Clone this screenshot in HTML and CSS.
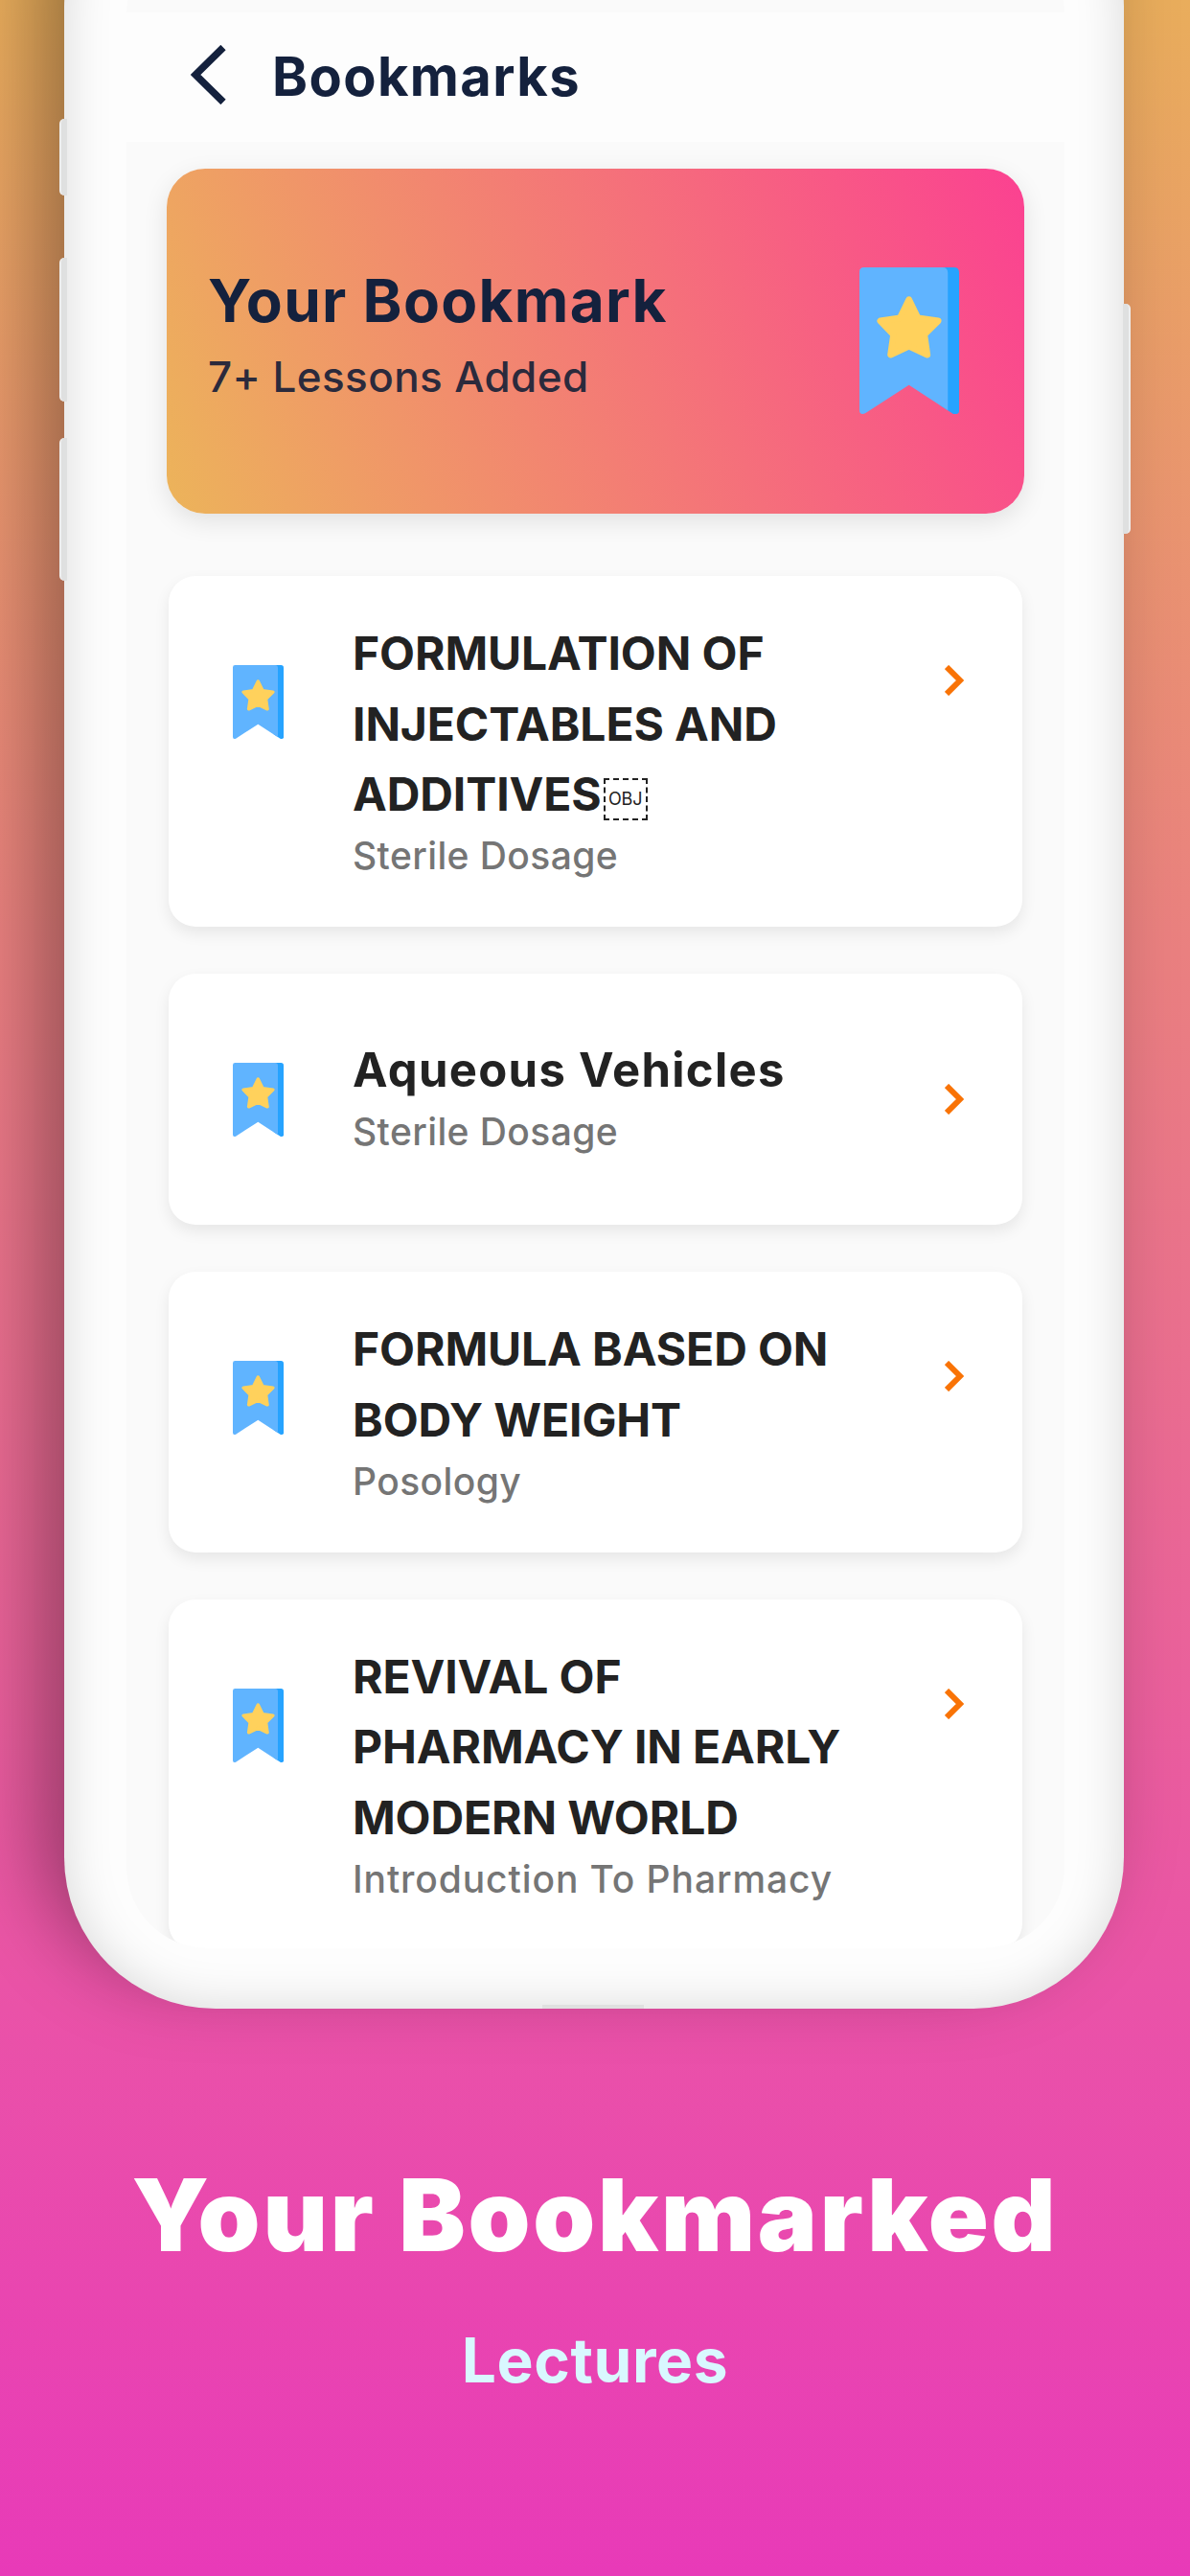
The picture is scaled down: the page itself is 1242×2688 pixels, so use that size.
FILE: index.html
```
<!DOCTYPE html>
<html lang="en">
<head>
  <meta charset="UTF-8">
  <meta name="viewport" content="width=device-width, initial-scale=1.0">
  <title>Bookmarks</title>
  <link rel="stylesheet" href="styles.css">
</head>
<body>
  <!-- Shared icons -->
  <svg class="sprite" width="0" height="0">
    <symbol id="bookmark" viewBox="0 0 310 460" preserveAspectRatio="none">
      <path fill="#26a3ff" d="M250 0H294Q310 0 310 16V450Q310 460 300 460H292L250 432Z"/>
      <path fill="#60b4ff" d="M14 0H258Q275 0 275 18V449L154 369L18 458Q0 464 0 448V14Q0 0 14 0Z"/>
      <path fill="#ffd15c" stroke="#ffd15c" stroke-width="20" stroke-linejoin="round" d="M154 101L182 159L245 168L202 211L211 274L154 247L97 274L106 211L65 168L126 159Z"/>
    </symbol>
    <symbol id="chevron" viewBox="0 0 20 32">
      <path fill="none" stroke="#f97306" stroke-width="6" d="M2 2L16 16L2 30"/>
    </symbol>
  </svg>

  <main class="phone">
    <span class="side-btn mute"></span>
    <span class="side-btn vol-up"></span>
    <span class="side-btn vol-down"></span>
    <span class="side-btn power"></span>

    <div class="screen">
      <header class="topbar">
        <svg class="back" viewBox="0 0 37 62">
          <path fill="none" stroke="#14213d" stroke-width="7.5" d="M34 2.5L5 31L34 59.5"/>
        </svg>
        <h1>Bookmarks</h1>
      </header>

      <section class="banner">
        <div>
          <h2>Your Bookmark</h2>
          <p>7+ Lessons Added</p>
        </div>
        <svg class="banner-icon"><use href="#bookmark"/></svg>
      </section>

      <ul class="list">
        <li class="item">
          <svg class="item-icon"><use href="#bookmark"/></svg>
          <div class="item-text">
            <h3>FORMULATION OF<br>INJECTABLES AND<br>ADDITIVES<span class="obj">OBJ</span></h3>
            <p>Sterile Dosage</p>
          </div>
          <svg class="arrow"><use href="#chevron"/></svg>
        </li>
        <li class="item short">
          <svg class="item-icon"><use href="#bookmark"/></svg>
          <div class="item-text">
            <h3>Aqueous Vehicles</h3>
            <p>Sterile Dosage</p>
          </div>
          <svg class="arrow"><use href="#chevron"/></svg>
        </li>
        <li class="item">
          <svg class="item-icon"><use href="#bookmark"/></svg>
          <div class="item-text">
            <h3>FORMULA BASED ON<br>BODY WEIGHT</h3>
            <p>Posology</p>
          </div>
          <svg class="arrow"><use href="#chevron"/></svg>
        </li>
        <li class="item last">
          <svg class="item-icon"><use href="#bookmark"/></svg>
          <div class="item-text">
            <h3>REVIVAL OF<br>PHARMACY IN EARLY<br>MODERN WORLD</h3>
            <p>Introduction To Pharmacy</p>
          </div>
          <svg class="arrow"><use href="#chevron"/></svg>
        </li>
      </ul>
    </div>
    <span class="port"></span>
  </main>

  <footer class="caption">
    <h2>Your Bookmarked</h2>
    <p>Lectures</p>
  </footer>
</body>
</html>
```
FILE: styles.css
```
:root {
  --navy: #14213d;
  --text: #222222;
  --muted: #757575;
}

* {
  box-sizing: border-box;
  margin: 0;
  padding: 0;
}

body {
  font-family: Inter, "Open Sans", sans-serif;
  width: 1242px;
  height: 2688px;
  overflow: hidden;
  display: flex;
  flex-direction: column;
  background: linear-gradient(180deg, #e9ad5c 0%, #ea8080 37%, #ea52a8 78%, #e83ab8 100%);
}

.sprite {
  position: absolute;
}

/* Phone frame, top part is cut off by the page */
.phone {
  position: relative;
  flex: none;
  width: 1106px;
  height: 2246px;
  margin: -150px 0 0 67px;
  padding: 80px 62px 63px 65px;
  border-radius: 158px;
  background: #fdfdfd;
  box-shadow: -28px -30px 80px rgba(0, 0, 0, 0.35), inset 0 0 50px rgba(0, 0, 0, 0.15);
}

.side-btn {
  position: absolute;
  left: -5px;
  width: 8px;
  background: #dfe0e0;
  border-left: 2px solid #eeeeee;
  border-radius: 5px 0 0 5px;
}

.mute { top: 274px; height: 80px; }
.vol-up { top: 419px; height: 150px; }
.vol-down { top: 607px; height: 149px; }

.power {
  left: auto;
  right: -7px;
  top: 467px;
  height: 240px;
  border-left: none;
  border-right: 2px solid #eeeeee;
  border-radius: 0 5px 5px 0;
}

.port {
  position: absolute;
  left: 499px;
  bottom: 0;
  width: 106px;
  height: 4px;
  background: #e0e0e0;
}

.screen {
  height: 100%;
  padding-top: 83px;
  background: #fafafa;
  border-radius: 85px;
  overflow: hidden;
}

.topbar {
  display: flex;
  align-items: center;
  gap: 48px;
  height: 135px;
  padding-left: 67px;
  background: #fdfdfd;
}

.back {
  width: 37px;
  height: 62px;
  margin-bottom: 6px;
}

.topbar h1 {
  margin-bottom: 2px;
  font-size: 56px;
  font-weight: 750;
  line-height: 60px;
  letter-spacing: 1.4px;
  color: var(--navy);
}

.banner {
  display: flex;
  justify-content: space-between;
  align-items: flex-start;
  height: 360px;
  margin: 28px 42px 0;
  padding: 103px 68px 0 43px;
  border-radius: 40px;
  background: linear-gradient(68deg, #ecb45a, #fb4191);
  box-shadow: 0 8px 26px rgba(0, 0, 0, 0.1);
}

.banner h2 {
  font-size: 62px;
  font-weight: 750;
  line-height: 70px;
  letter-spacing: 1.3px;
  color: var(--navy);
}

.banner p {
  margin-top: 14px;
  font-size: 44px;
  font-weight: 450;
  line-height: 60px;
  letter-spacing: 0.4px;
  color: #2b2a3c;
}

.banner-icon {
  width: 104px;
  height: 153px;
}

.list {
  list-style: none;
  display: flex;
  flex-direction: column;
  gap: 49px;
  margin: 65px 44px 0;
}

.item {
  display: flex;
  align-items: flex-start;
  gap: 72px;
  padding: 44px 61px 48px 67px;
  border-radius: 28px;
  background: #fff;
  box-shadow: 0 7px 16px rgba(0, 0, 0, 0.08);
}

.item-icon {
  flex: none;
  width: 53px;
  height: 77px;
  margin-top: 49px;
}

.item-text {
  flex: 1;
}

.item h3 {
  font-size: 48px;
  font-weight: 700;
  line-height: 73.7px;
  letter-spacing: -0.1px;
  color: var(--text);
  white-space: nowrap;
}

.item p {
  font-size: 39px;
  font-weight: 450;
  line-height: 53px;
  letter-spacing: 0.4px;
  color: var(--muted);
}

.arrow {
  flex: none;
  width: 20px;
  height: 32px;
  margin-top: 49px;
}

.short {
  height: 262px;
}

.short h3 {
  margin-top: 20px;
  font-size: 49px;
  letter-spacing: 1.3px;
}

.short .arrow {
  margin-top: 71px;
}

.last p {
  letter-spacing: 0.9px;
}

.obj {
  display: inline-flex;
  align-items: center;
  justify-content: center;
  width: 46px;
  height: 44px;
  margin-left: 2px;
  vertical-align: 6px;
  border: 2px dashed var(--text);
  font-size: 18px;
  font-weight: 400;
  line-height: 1;
}

.caption {
  padding-top: 155px;
  text-align: center;
}

.caption h2 {
  font-size: 104px;
  font-weight: 900;
  line-height: 120px;
  letter-spacing: 2.8px;
  color: #fff;
}

.caption p {
  margin-top: 52px;
  font-size: 64px;
  font-weight: 650;
  line-height: 80px;
  letter-spacing: 0.6px;
  color: #d9f8ff;
}
```
